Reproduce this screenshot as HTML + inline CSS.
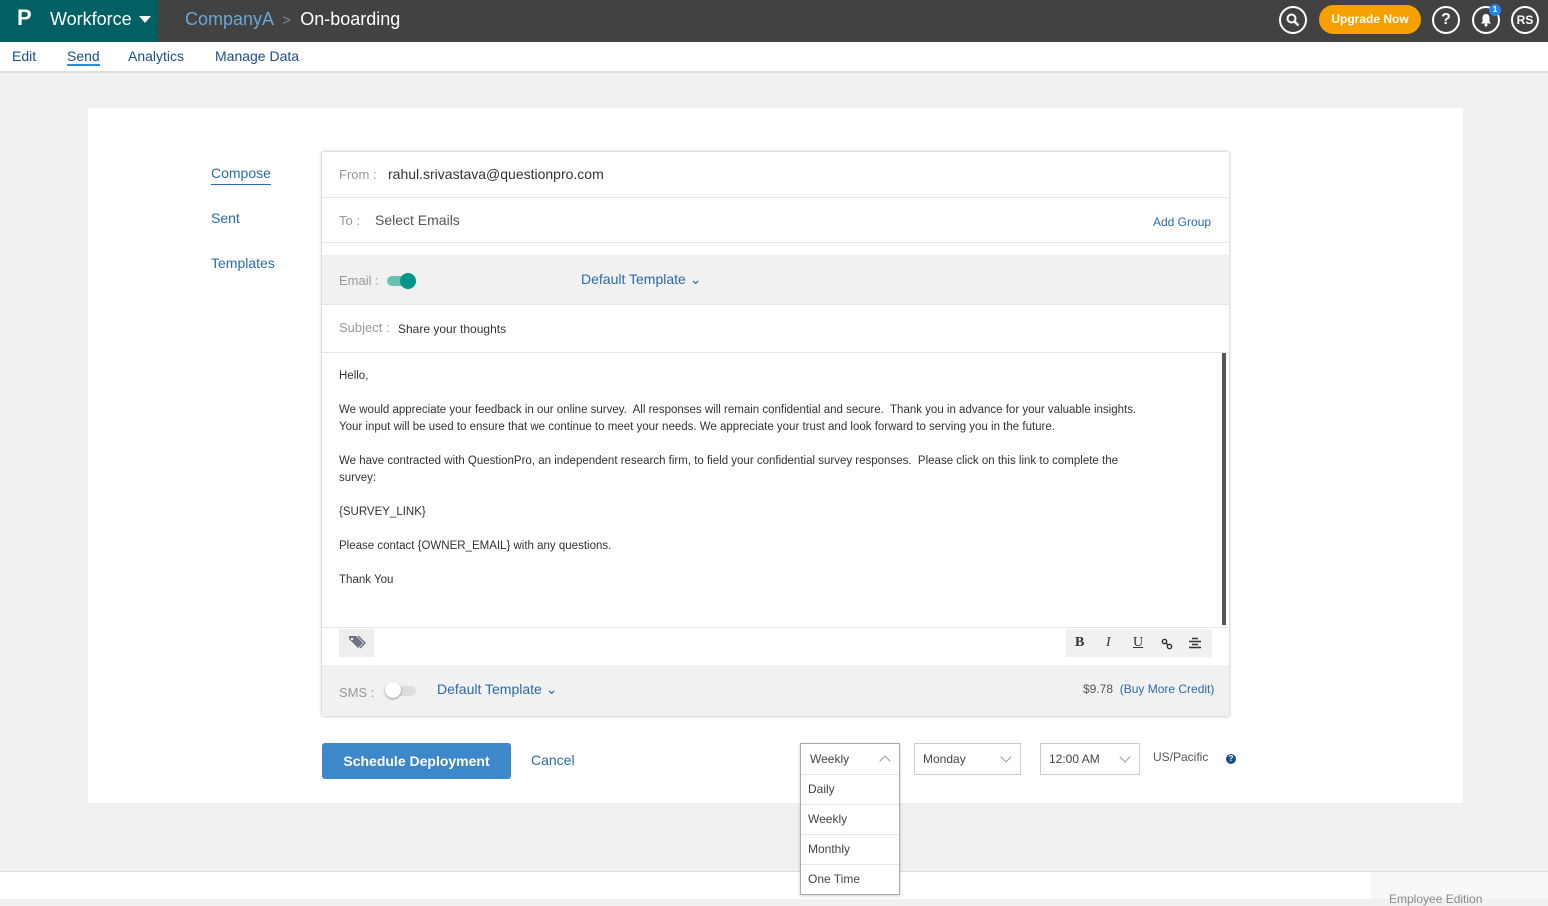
<!DOCTYPE html>
<html><head><meta charset="utf-8"><style>
*{box-sizing:border-box;margin:0;padding:0}
body{width:1548px;height:899px;overflow:hidden;background:#f0f0f0;font-family:"Liberation Sans",sans-serif;position:relative;color:#444}
.abs{position:absolute}
.top{left:0;top:0;width:1548px;height:42px;background:#424242}
.brand{left:0;top:0;width:158px;height:42px;background:#006064}
.nav{left:0;top:42px;width:1548px;height:31px;background:#fff;border-bottom:2px solid #ddd}
.nav span{position:absolute;top:6px;font-size:14px;color:#1a4f8a}
.circ{width:28px;height:28px;border:2px solid #fff;border-radius:50%;color:#fff;font-weight:bold;text-align:center;line-height:24px;font-size:13px}
.card{left:88px;top:108px;width:1375px;height:695px;background:#fff}
.panel{left:322px;top:152px;width:907px;height:564px;background:#fff;box-shadow:0 0 3px rgba(0,0,0,.35)}
.row{position:absolute;left:0;width:907px;border-bottom:1px solid #e6e6e6}
.lbl{color:#999;font-size:13px}
.blue{color:#2a6ab0}
.body p{font-size:11.5px;color:#333;line-height:17px;margin-bottom:17px;white-space:nowrap}
.sel{position:absolute;height:32px;border:1px solid #ccc;background:#fff;font-size:12px;padding:8px;color:#444}
.chev{position:absolute;right:10px;top:9px;width:8px;height:8px;border-right:1px solid #999;border-bottom:1px solid #999;transform:rotate(45deg)}
.dd div{height:30px;border-top:1px solid #e6e6e6;padding:7px;font-size:12px}
</style></head><body>
<div class="abs top"></div>
<div class="abs brand"></div>
<div class="abs" style="left:17px;top:5px;color:#fff;font-size:22px;font-weight:bold">P</div>
<div class="abs" style="left:50px;top:9px;color:#fff;font-size:18px">Workforce</div>
<div class="abs" style="left:139px;top:16px;border-left:6px solid transparent;border-right:6px solid transparent;border-top:7px solid #fff"></div>
<div class="abs" style="left:185px;top:9px;color:#6aa6d8;font-size:18px">CompanyA <span style="color:#888;font-size:15px">&nbsp;&gt;&nbsp;</span> <span style="color:#fff">On-boarding</span></div>
<div class="abs circ" style="left:1279px;top:6px"><svg width="14" height="14" viewBox="0 0 14 14" style="margin-top:5px"><circle cx="5.5" cy="5.5" r="4" stroke="#fff" stroke-width="2" fill="none"/><path d="M8.5 8.5L12.5 12.5" stroke="#fff" stroke-width="2.5"/></svg></div>
<div class="abs" style="left:1319px;top:5px;width:102px;height:29px;background:#f8a000;border-radius:15px;color:#fff;font-size:12px;font-weight:bold;text-align:center;line-height:29px">Upgrade Now</div>
<div class="abs circ" style="left:1432px;top:6px;font-size:16px">?</div>
<div class="abs circ" style="left:1472px;top:6px"><svg width="14" height="14" viewBox="0 0 14 14" style="margin-top:5px"><path d="M7 1C4.5 1 3.5 3 3.5 5v3.5L2 10.5h10L10.5 8.5V5C10.5 3 9.5 1 7 1z" fill="#fff"/><circle cx="7" cy="12" r="1.5" fill="#fff"/></svg></div>
<div class="abs" style="left:1489px;top:4px;width:12px;height:12px;border-radius:50%;background:#1e88e5;color:#fff;font-size:8px;text-align:center;line-height:12px;font-weight:bold">1</div>
<div class="abs circ" style="left:1511px;top:6px;font-size:12px">RS</div>
<div class="abs nav"><span style="left:12px">Edit</span><span style="left:67px;border-bottom:2px solid #2a8fd0">Send</span><span style="left:128px">Analytics</span><span style="left:215px">Manage Data</span></div>
<div class="abs card"></div>
<div class="abs blue" style="left:211px;top:165px;font-size:14px;border-bottom:1px solid #2a6ab0;padding-bottom:3px">Compose</div>
<div class="abs blue" style="left:211px;top:210px;font-size:14px">Sent</div>
<div class="abs blue" style="left:211px;top:255px;font-size:14px">Templates</div>
<div class="abs panel">
 <div class="row" style="top:0;height:46px"><span class="lbl abs" style="left:17px;top:15px">From :</span><span class="abs" style="left:66px;top:14px;font-size:14px;color:#333">rahul.srivastava@questionpro.com</span></div>
 <div class="row" style="top:46px;height:45px"><span class="lbl abs" style="left:17px;top:15px">To :</span><span class="abs" style="left:53px;top:14px;font-size:14px;color:#555">Select Emails</span><span class="abs blue" style="left:831px;top:17px;font-size:12px">Add Group</span></div>
 <div class="row" style="top:103px;height:50px;background:#f1f1f1"><span class="lbl abs" style="left:17px;top:18px">Email :</span>
  <div class="abs" style="left:65px;top:21px;width:26px;height:10px;border-radius:5px;background:#6cbfb5"></div><div class="abs" style="left:78px;top:18px;width:16px;height:16px;border-radius:50%;background:#009688"></div>
  <span class="abs blue" style="left:259px;top:16px;font-size:14px">Default Template ⌄</span></div>
 <div class="row" style="top:153px;height:48px"><span class="lbl abs" style="left:17px;top:15px">Subject :</span><span class="abs" style="left:76px;top:17px;font-size:12px;color:#333">Share your thoughts</span></div>
 <div class="abs body" style="left:17px;top:216px;width:860px">
  <p>Hello,</p>
  <p>We would appreciate your feedback in our online survey.&nbsp; All responses will remain confidential and secure.&nbsp; Thank you in advance for your valuable insights.<br>Your input will be used to ensure that we continue to meet your needs. We appreciate your trust and look forward to serving you in the future.</p>
  <p>We have contracted with QuestionPro, an independent research firm, to field your confidential survey responses.&nbsp; Please click on this link to complete the<br>survey:</p>
  <p>{SURVEY_LINK}</p>
  <p>Please contact {OWNER_EMAIL} with any questions.</p>
  <p>Thank You</p>
 </div>
 <div class="abs" style="left:900px;top:201px;width:4px;height:272px;background:#555"></div>
 <div class="abs" style="left:0;top:475px;width:907px;height:1px;background:#e6e6e6"></div>
 <div class="abs" style="left:17px;top:477px;width:35px;height:28px;background:#eee;text-align:center;padding-top:6px"><svg width="18" height="14" viewBox="0 0 18 14"><path d="M1 1h7l7 7-5 5-9-9z" fill="#6b7280"/><circle cx="4" cy="4" r="1.3" fill="#eee"/><path d="M10 1l7 7-5 5" stroke="#6b7280" stroke-width="1.5" fill="none"/></svg></div>
 <div class="abs" style="left:744px;top:477px;width:146px;height:28px;background:#f1f1f1;font-family:'Liberation Serif',serif;font-size:14px;color:#333">
  <b class="abs" style="left:9px;top:6px">B</b><i class="abs" style="left:40px;top:6px">I</i><u class="abs" style="left:67px;top:6px">U</u>
  <svg class="abs" style="left:95px;top:9px" width="12" height="12" viewBox="0 0 12 12"><circle cx="3.5" cy="3.5" r="2.2" stroke="#333" stroke-width="1.4" fill="none"/><circle cx="8.5" cy="8.5" r="2.2" stroke="#333" stroke-width="1.4" fill="none"/><path d="M5 5l2 2" stroke="#333" stroke-width="1.4"/></svg>
  <svg class="abs" style="left:123px;top:8px" width="12" height="12" viewBox="0 0 12 12"><path d="M3 1.5h6M0 4.5h12M3 7.5h6M0 10.5h12" stroke="#333" stroke-width="1.4"/></svg></div>
 <div class="abs" style="left:0;top:513px;width:907px;height:51px;background:#f1f1f1">
  <span class="lbl abs" style="left:17px;top:20px">SMS :</span>
  <div class="abs" style="left:64px;top:21px;width:30px;height:10px;border-radius:5px;background:#ddd"></div><div class="abs" style="left:63px;top:17px;width:16px;height:16px;border-radius:50%;background:#fff;box-shadow:0 1px 2px rgba(0,0,0,.4)"></div>
  <span class="abs blue" style="left:115px;top:16px;font-size:14px">Default Template ⌄</span>
  <span class="abs" style="left:761px;top:17px;font-size:12px;color:#555">$9.78 &nbsp;<span class="blue">(Buy More Credit)</span></span>
 </div>
</div>
<div class="abs" style="left:322px;top:743px;width:189px;height:36px;background:#3d87cb;border-radius:3px;color:#fff;font-size:14px;font-weight:bold;text-align:center;line-height:36px">Schedule Deployment</div>
<div class="abs blue" style="left:531px;top:752px;font-size:14px">Cancel</div>
<div class="abs" style="left:0;top:871px;width:1548px;height:28px;background:#fff;border-top:1px solid #ddd"></div>
<div class="abs" style="left:1370px;top:872px;width:178px;height:27px;background:#f8f8f8;font-size:12px;color:#888;padding:20px 0 0 19px">Employee Edition</div>
<div class="sel" style="left:914px;top:743px;width:107px">Monday<div class="chev"></div></div>
<div class="sel" style="left:1040px;top:743px;width:100px">12:00 AM<div class="chev"></div></div>
<div class="abs" style="left:1153px;top:750px;font-size:12px;color:#555">US/Pacific</div>
<div class="abs" style="left:1226px;top:754px;width:10px;height:10px;border-radius:50%;background:#1a4f8a;color:#fff;font-size:8px;text-align:center;line-height:10px;font-weight:bold">?</div>
<div class="abs dd" style="left:800px;top:743px;width:100px;background:#fff;border:1px solid #aaa;box-shadow:0 1px 3px rgba(0,0,0,.2)">
 <div style="border:0;height:30px;padding:8px 9px;position:relative">Weekly<span style="position:absolute;right:10px;top:13px;width:8px;height:8px;border-left:1px solid #999;border-top:1px solid #999;transform:rotate(45deg)"></span></div>
 <div>Daily</div><div>Weekly</div><div>Monthly</div><div>One Time</div>
</div>
</body></html>
